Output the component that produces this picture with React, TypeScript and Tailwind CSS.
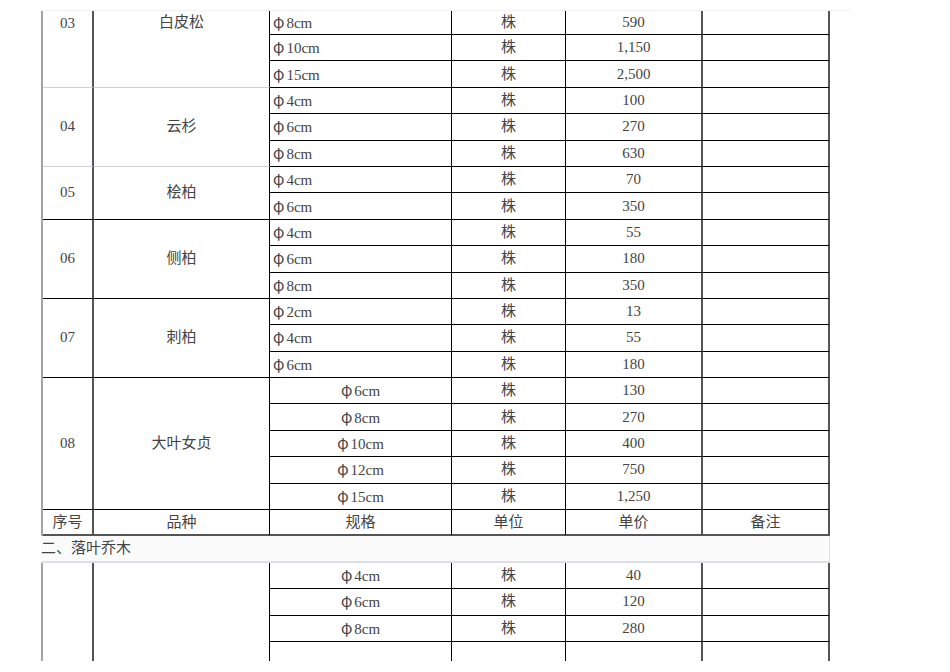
import React from "react";

type Group = {
  no: string;
  name: string;
  top?: boolean;
  light?: boolean;
  center?: boolean;
  rows: [string, string][];
};

const groups: Group[] = [
  { no: "03", name: "白皮松", top: true, light: true, rows: [["8cm", "590"], ["10cm", "1,150"], ["15cm", "2,500"]] },
  { no: "04", name: "云杉", light: true, rows: [["4cm", "100"], ["6cm", "270"], ["8cm", "630"]] },
  { no: "05", name: "桧柏", rows: [["4cm", "70"], ["6cm", "350"]] },
  { no: "06", name: "侧柏", rows: [["4cm", "55"], ["6cm", "180"], ["8cm", "350"]] },
  { no: "07", name: "刺柏", rows: [["2cm", "13"], ["4cm", "55"], ["6cm", "180"]] },
  {
    no: "08",
    name: "大叶女贞",
    center: true,
    rows: [["6cm", "130"], ["8cm", "270"], ["10cm", "400"], ["12cm", "750"], ["15cm", "1,250"]],
  },
];

const span: Record<number, string> = {
  2: "row-span-2",
  3: "row-span-3",
  4: "row-span-4",
  5: "row-span-5",
};

function Spec({ v }: { v: string }) {
  return (
    <span>
      <span className="mr-[2px]" style={{ fontFamily: '"Noto Sans CJK SC", "DejaVu Serif", serif' }}>
        φ
      </span>
      {v}
    </span>
  );
}

export default function App() {
  return (
    <div
      className="min-h-[672px] w-[950px] bg-white pl-[41px] pt-[10px] text-[15px] leading-none text-[#444]"
      style={{ fontFamily: '"Liberation Serif", "Noto Sans CJK SC", serif' }}
    >
      <div className="h-px w-[809px] bg-[#f1f1f1]" />
      <div className="grid w-[789px] grid-cols-[51px_176px_182px_114px_137px_127px] grid-rows-[24px_repeat(23,26.4px)_19px] border-l-2 border-[#a3a3a3]">
        {groups.map((g) => {
          const sep = g.light ? "border-b-[#cfd3d8]" : "border-b-black";
          return (
            <React.Fragment key={g.no}>
              <div
                className={`${span[g.rows.length]} flex justify-center border-r-2 border-b border-r-[#555] ${sep} ${
                  g.top ? "items-start pt-[5px]" : "items-center"
                }`}
              >
                {g.no}
              </div>
              <div
                className={`${span[g.rows.length]} flex justify-center border-r border-b border-r-black ${sep} ${
                  g.top ? "items-start pt-[4px]" : "items-center"
                }`}
              >
                {g.name}
              </div>
              {g.rows.map(([spec, price], i) => (
                <React.Fragment key={i}>
                  <div
                    className={`flex items-center border-b border-r border-black ${
                      g.center ? "justify-center" : "justify-start pl-[3px]"
                    }`}
                  >
                    <Spec v={spec} />
                  </div>
                  <div className="flex items-center justify-center border-b border-r border-black">株</div>
                  <div className="flex items-center justify-center border-b border-r-2 border-b-black border-r-[#555]">
                    {price}
                  </div>
                  <div className="border-b border-r-2 border-b-black border-r-[#555]" />
                </React.Fragment>
              ))}
            </React.Fragment>
          );
        })}

        {/* header row */}
        <div className="flex items-center justify-center border-b-2 border-r-2 border-[#555]">序号</div>
        <div className="flex items-center justify-center border-b-2 border-r border-b-[#555] border-r-black">品种</div>
        <div className="flex items-center justify-center border-b-2 border-r border-b-[#555] border-r-black">规格</div>
        <div className="flex items-center justify-center border-b-2 border-r border-b-[#555] border-r-black">单位</div>
        <div className="flex items-center justify-center border-b-2 border-r-2 border-[#555]">单价</div>
        <div className="flex items-center justify-center border-b-2 border-r-2 border-[#555]">备注</div>

        {/* section row */}
        <div className="col-span-6 -ml-[2px] flex items-center border-b-2 border-r border-[#dde1e6] bg-[#fbfbfb]">
          二、落叶乔木
        </div>

        {/* next group */}
        <div className="row-span-4 border-r-2 border-r-[#555]" />
        <div className="row-span-4 border-r border-r-black" />
        {[
          ["4cm", "40"],
          ["6cm", "120"],
          ["8cm", "280"],
        ].map(([spec, price], i) => (
          <React.Fragment key={i}>
            <div className="flex items-center justify-center border-b border-r border-black">
              <Spec v={spec} />
            </div>
            <div className="flex items-center justify-center border-b border-r border-black">株</div>
            <div className="flex items-center justify-center border-b border-r-2 border-b-black border-r-[#555]">
              {price}
            </div>
            <div className="border-b border-r-2 border-b-black border-r-[#555]" />
          </React.Fragment>
        ))}
        <div className="border-r border-black" />
        <div className="border-r border-black" />
        <div className="border-r-2 border-[#555]" />
        <div className="border-r-2 border-[#555]" />
      </div>
    </div>
  );
}
